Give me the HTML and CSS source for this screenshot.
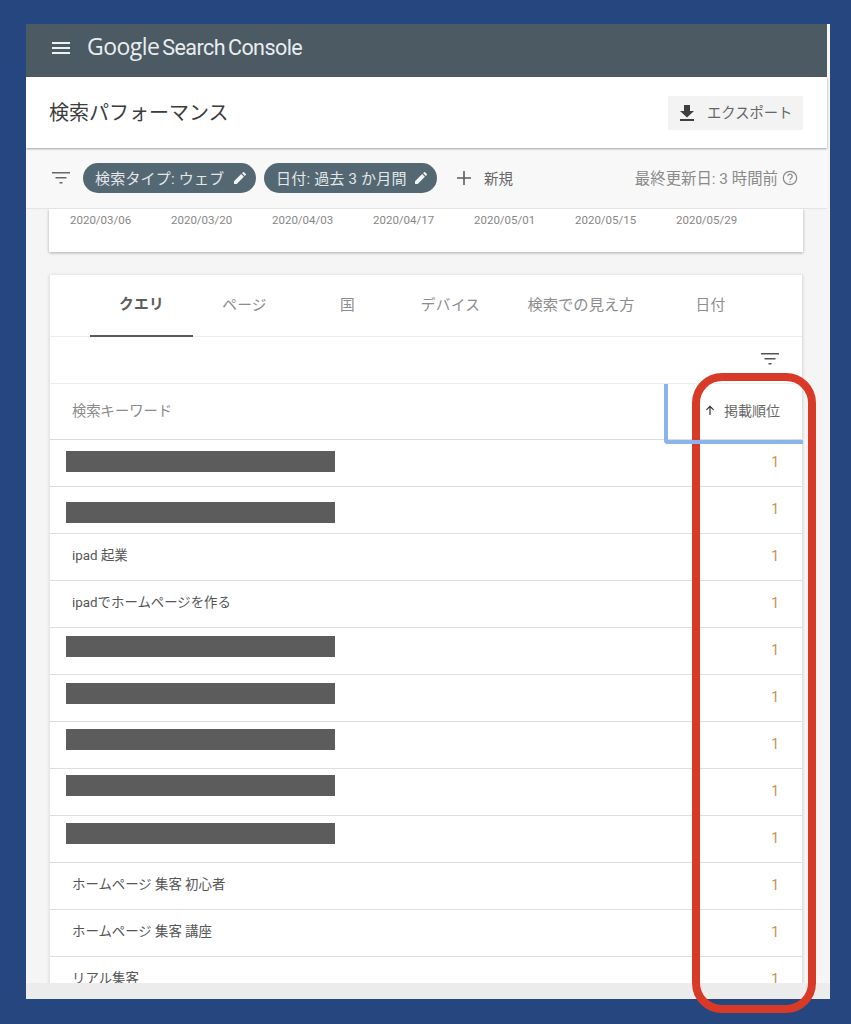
FILE: index.html
```html
<!DOCTYPE html>
<html lang="ja">
<head>
<meta charset="utf-8">
<title>検索パフォーマンス</title>
<link rel="stylesheet" href="styles.css">
</head>
<body>
<div class="app">
  <header class="topbar">
    <svg class="menu-icon" viewBox="0 0 18 12"><path d="M0 0h18v2H0zM0 5h18v2H0zM0 10h18v2H0z"/></svg>
    <div class="logo"><span class="logo-g">Google</span> <span class="logo-s">Search</span> <span class="logo-c">Console</span></div>
  </header>
  <section class="titlebar">
    <h1 class="page-title">検索パフォーマンス</h1>
    <button class="export">
      <svg class="export-icon" viewBox="0 0 14 16"><path d="M4 0h6v6h4l-7 6.500L0 6h4zM0 14h14v2H0z"/></svg>
      <span>エクスポート</span>
    </button>
  </section>
  <section class="filterbar">
    <svg class="filter-icon" viewBox="0 0 18 12"><path d="M0 0h18v1.600H0zM3.500 5h11v1.600h-11zM7.500 10h3v1.600h-3z"/></svg>
    <div class="chip"><span>検索タイプ: ウェブ</span><svg class="pen" viewBox="0 0 12 12"><path d="M0 12V9.300L7.200 2.100l2.700 2.700L2.700 12zM8.100 1.200L9.100.200a.7.7 0 0 1 1 0l1.700 1.700a.7.7 0 0 1 0 1l-1 1z"/></svg></div>
    <div class="chip"><span>日付: 過去 3 か月間</span><svg class="pen" viewBox="0 0 12 12"><path d="M0 12V9.300L7.200 2.100l2.700 2.700L2.700 12zM8.100 1.200L9.100.200a.7.7 0 0 1 1 0l1.700 1.700a.7.7 0 0 1 0 1l-1 1z"/></svg></div>
    <div class="new">
      <svg class="plus" viewBox="0 0 14 14"><path d="M6.200 0h1.600v6.200H14v1.600H7.800V14H6.200V7.800H0V6.200h6.200z"/></svg>
      <span>新規</span>
    </div>
    <div class="updated"><span>最終更新日: 3 時間前</span><svg class="help" viewBox="0 0 16 16"><circle cx="8" cy="8" r="6.700"/><path d="M5.800 6.300a2.200 2.200 0 1 1 3.500 1.800c-.8.600-1.300 1-1.300 2M8 11.200v1.300"/></svg></div>
  </section>
  <main class="content">
    <div class="card chart-tail">
      <span>2020/03/06</span><span>2020/03/20</span><span>2020/04/03</span><span>2020/04/17</span><span>2020/05/01</span><span>2020/05/15</span><span>2020/05/29</span>
    </div>
    <div class="card table-card">
      <nav class="tabs">
        <a class="tab active">クエリ</a>
        <a class="tab">ページ</a>
        <a class="tab">国</a>
        <a class="tab">デバイス</a>
        <a class="tab wide">検索での見え方</a>
        <a class="tab last">日付</a>
      </nav>
      <div class="toolbar">
        <svg class="filter-icon small" viewBox="0 0 18 12"><path d="M0 0h18v1.600H0zM3.500 5h11v1.600h-11zM7.500 10h3v1.600h-3z"/></svg>
      </div>
      <div class="thead">
        <div class="th-query">検索キーワード</div>
        <div class="th-pos">
          <svg class="arrow" viewBox="0 0 10 10"><path d="M5 .500L9 4.500l-.8.800L5.600 2.800V10H4.400V2.800L1.800 5.300 1 4.500z"/></svg>
          <span>掲載順位</span>
        </div>
      </div>
      <div class="row"><div class="mask m11"></div><div class="pos">1</div></div>
      <div class="row"><div class="mask m15"></div><div class="pos">1</div></div>
      <div class="row"><div class="query">ipad 起業</div><div class="pos">1</div></div>
      <div class="row"><div class="query">ipadでホームページを作る</div><div class="pos">1</div></div>
      <div class="row"><div class="mask m8"></div><div class="pos">1</div></div>
      <div class="row"><div class="mask m8"></div><div class="pos">1</div></div>
      <div class="row"><div class="mask m7"></div><div class="pos">1</div></div>
      <div class="row"><div class="mask m6"></div><div class="pos">1</div></div>
      <div class="row"><div class="mask m7"></div><div class="pos">1</div></div>
      <div class="row"><div class="query">ホームページ 集客 初心者</div><div class="pos">1</div></div>
      <div class="row"><div class="query">ホームページ 集客 講座</div><div class="pos">1</div></div>
      <div class="row"><div class="query">リアル集客</div><div class="pos">1</div></div>
    </div>
  </main>
  <div class="scrollbar"></div>
</div>
<div class="callout"></div>
</body>
</html>
```
FILE: styles.css
```css
* { box-sizing: border-box; }
html, body { margin: 0; padding: 0; }
body {
  width: 851px;
  height: 1024px;
  overflow: hidden;
  position: relative;
  background: #26467f;
  padding: 24px 0 0 26px;
  font-family: Roboto, "Noto Sans CJK JP", sans-serif;
  color: #444;
}
.app {
  width: 804px;
  height: 975px;
  background: #f5f5f6;
  display: flex;
  flex-direction: column;
  overflow: hidden;
}
.topbar {
  width: 801px;
  height: 53px;
  flex: none;
  background: #4b5a63;
  display: flex;
  align-items: center;
  padding-left: 26px;
  color: #e9edef;
}
.menu-icon { width: 18px; height: 12px; fill: #eef1f2; margin: 0 17px 6px 0; }
.logo { font-size: 23px; letter-spacing: -0.55px; word-spacing: -2.500px; line-height: 1; font-family: "Open Sans", sans-serif; margin-bottom: 8px; white-space: nowrap; }
.logo-s, .logo-c { font-size: 21.500px; font-family: Roboto, sans-serif; font-weight: 400; letter-spacing: -0.55px; }
.titlebar {
  position: relative;
  z-index: 3;
  width: 801px;
  height: 71px;
  flex: none;
  background: #fff;
  box-shadow: 0 1px 2px rgba(0,0,0,.35);
  display: flex;
  align-items: center;
  justify-content: space-between;
  padding: 0 24px 0 23px;
}
.page-title { margin: 0 0 3px; font-size: 20px; font-weight: 400; color: #3c3c3c; }
.export {
  width: 135px;
  height: 34px;
  border: 0;
  background: #f3f3f3;
  display: flex;
  align-items: center;
  padding: 0 0 0 12px;
  font: inherit;
  font-size: 14.300px;
  color: #666;
}
.export span { margin-bottom: 2px; }
.export-icon { width: 14px; height: 16px; fill: #3f3f3f; margin-right: 13px; flex: none; }
.filterbar {
  position: relative;
  z-index: 2;
  width: 801px;
  height: 61px;
  flex: none;
  background: #f8f8f8;
  border-bottom: 1px solid #e4e4e4;
  display: flex;
  align-items: center;
  padding: 0 29px 0 26px;
}
.filter-icon { width: 18px; height: 12px; fill: #666; flex: none; }
.chip {
  height: 30px;
  border-radius: 15px;
  background: #546873;
  color: #e3e7e9;
  font-size: 15px;
  letter-spacing: .2px;
  white-space: nowrap;
  display: flex;
  align-items: center;
  justify-content: space-between;
  width: 173px;
  padding: 0 10px 0 12px;
  margin-left: 8px;
}
.chip span { margin-bottom: 2px; }
.chip:first-of-type { margin-left: 13px; }
.pen { width: 12px; height: 12px; fill: #f2f4f5; flex: none; }
.new { display: flex; align-items: center; margin-left: 20px; font-size: 14.500px; color: #666; }
.new span { margin-bottom: 2px; }
.plus { width: 14px; height: 14px; fill: #5c5c5c; margin-right: 13px; }
.updated { margin-left: auto; display: flex; align-items: center; font-size: 15.400px; color: #8a8a8a; white-space: nowrap; }
.updated span { margin-bottom: 2px; }
.help { width: 16px; height: 16px; margin-left: 4px; fill: none; stroke: #8a8a8a; stroke-width: 1.200; }
.content {
  flex: 1;
  min-height: 0;
  overflow: hidden;
  padding: 0 27px 0 23px;
  background: #f5f5f6;
}
.card {
  width: 754px;
  background: #fff;
  box-shadow: 0 1px 3px rgba(0,0,0,.3);
}
.chart-tail {
  height: 43px;
  display: grid;
  grid-template-columns: repeat(7, 101px);
  padding: 4px 0 0 21px;
  font-size: 11.500px;
  line-height: 15px;
  color: #868686;
  align-items: start;
}
.table-card {
  margin-top: 23px;
  border-left: 1px solid #e6e6e6;
  border-right: 1px solid #e0e0e0;
  box-shadow: 0 0 3px rgba(0,0,0,.12);
}
.tabs {
  height: 62px;
  display: flex;
  padding-left: 40px;
  border-bottom: 1px solid #ececec;
}
.tab {
  width: 103px;
  display: flex;
  align-items: center;
  justify-content: center;
  padding-bottom: 5px;
  font-size: 14.700px;
  letter-spacing: .3px;
  color: #8c8c8c;
}
.tab.wide { width: 158px; font-size: 15.300px; letter-spacing: 0; }
.tab.last { width: 101px; }
.tab.active {
  font-weight: 700;
  color: #5c5c5c;
  border-bottom: 2px solid #5a5a5a;
  height: 62px;
}
.toolbar {
  height: 47px;
  display: flex;
  align-items: center;
  justify-content: flex-end;
  padding: 0 23px 3px 0;
  border-bottom: 1px solid #ececec;
}
.filter-icon.small { fill: #555; }
.thead {
  height: 56px;
  display: flex;
  border-bottom: 1px solid #dcdcdc;
  font-size: 14.300px;
}
.th-query { flex: 1; display: flex; align-items: center; padding: 0 0 5px 22px; color: #8a8a8a; }
.th-pos {
  width: 139px;
  height: 60px;
  flex: none;
  margin-right: -1px;
  position: relative;
  z-index: 1;
  border-left: 4px solid #8ab4ee;
  border-bottom: 4px solid #8ab4ee;
  border-bottom-left-radius: 4px;
  display: flex;
  align-items: center;
  justify-content: flex-end;
  padding: 0 23px 5px 0;
  font-size: 14px;
  color: #666;
}
.arrow { width: 10px; height: 10px; fill: #333; margin-right: 9px; }
.row {
  height: 47px;
  display: flex;
  justify-content: space-between;
  border-bottom: 1px solid #dedede;
  font-size: 13.400px;
}
.query { padding: 13px 0 0 22px; line-height: 17px; color: #555; }
.mask { width: 269px; height: 21px; margin-left: 16px; background: #5c5c5c; }
.m6 { margin-top: 6px; }
.m7 { margin-top: 7px; }
.m8 { margin-top: 8px; }
.m11 { margin-top: 11px; }
.m15 { margin-top: 15px; }
.pos { padding: 13px 23px 0 0; line-height: 18px; font-size: 14px; color: #c8914f; }
.scrollbar { height: 16px; flex: none; background: #ececec; }
.callout {
  position: absolute;
  left: 692px;
  top: 373px;
  width: 124px;
  height: 640px;
  border: 8px solid #d93a27;
  border-radius: 30px;
}
```
